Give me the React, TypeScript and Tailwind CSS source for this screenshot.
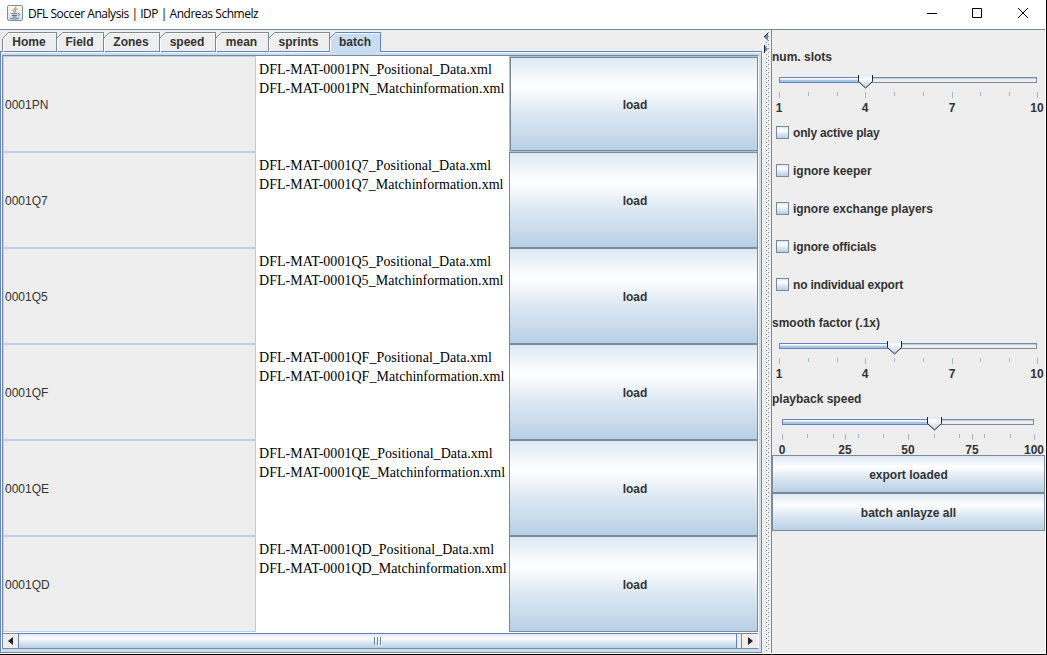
import React from "react";

const TABS = [
  { name: "Home", width: "w-[54px]" },
  { name: "Field", width: "w-[47px]" },
  { name: "Zones", width: "w-[56px]" },
  { name: "speed", width: "w-[56px]" },
  { name: "mean", width: "w-[53px]" },
  { name: "sprints", width: "w-[61px]" },
];

const MATCHES = ["0001PN", "0001Q7", "0001Q5", "0001QF", "0001QE", "0001QD"];

const METAL =
  "bg-[linear-gradient(to_bottom,#dde8f3_0%,#ffffff_30%,#dde8f3_60%,#b8cfe5_100%)]";

type Tick = { x: number; label?: string };

const TICKS_TEN: Tick[] = [
  { x: 7, label: "1" }, { x: 36 }, { x: 65 }, { x: 93, label: "4" }, { x: 122 },
  { x: 151 }, { x: 180, label: "7" }, { x: 208 }, { x: 237 }, { x: 265, label: "10" },
];

const TICKS_HUNDRED: Tick[] = [
  { x: 10, label: "0" }, { x: 35 }, { x: 61 }, { x: 73, label: "25" }, { x: 86 },
  { x: 111 }, { x: 136, label: "50" }, { x: 162 }, { x: 187 }, { x: 200, label: "75" },
  { x: 212 }, { x: 238 }, { x: 262, label: "100" },
];

function Slider({ start, end, value, ticks }: { start: number; end: number; value: number; ticks: Tick[] }) {
  return (
    <svg width="273" height="38" className="block h-[38px] shrink-0 overflow-visible">
      <defs>
        <linearGradient id="thumb" x1="0" y1="0" x2="0" y2="1">
          <stop offset="0" stopColor="#dde8f3" />
          <stop offset="0.3" stopColor="#fff" />
          <stop offset="0.6" stopColor="#dde8f3" />
          <stop offset="1" stopColor="#b8cfe5" />
        </linearGradient>
      </defs>
      <rect x={start + 0.5} y="1.5" width={end - start - 1} height="5" fill="#eeeeee" stroke="#7a8a99" />
      <path d={`M${value} 2.5H${end - 1}`} stroke="#b8cfe5" />
      <rect x={start + 0.5} y="1.5" width={value - start} height="5" fill="#fff" stroke="#6382bf" />
      <path d={`M${start + 1} 3.5H${value}`} stroke="#dde8f3" />
      <path d={`M${start + 1} 5H${value}`} stroke="#a9c3e2" strokeWidth="2" />
      <path
        d={`M${value - 6.5} -1V5.5L${value + 0.5} 12L${value + 7.5} 5.5V-1`}
        fill="url(#thumb)"
        stroke="#1f2427"
      />
      {ticks.map((t) => (
        <g key={t.x}>
          <path d={`M${t.x + 0.5} 16V${t.label ? 22 : 20}`} stroke="#a3b8cc" />
          {t.label && (
            <text x={t.x} y="36" textAnchor="middle" fill="#333333">
              {t.label}
            </text>
          )}
        </g>
      ))}
    </svg>
  );
}

function Caption({ text }: { text: string }) {
  return <div className="flex h-[38px] shrink-0 items-center">{text}</div>;
}

function Check({ text, spacing = "" }: { text: string; spacing?: string }) {
  return (
    <label className="flex h-[38px] shrink-0 items-center gap-1 pl-1">
      <span className={`mb-px size-[13px] border border-[#7a8a99] ${METAL}`} />
      <span className={spacing}>{text}</span>
    </label>
  );
}

function JavaIcon() {
  return (
    <svg width="16" height="16" viewBox="0 0 16 16" className="shrink-0">
      <defs>
        <linearGradient id="plate" x1="0" y1="0" x2="0" y2="1">
          <stop offset="0" stopColor="#fafafa" />
          <stop offset="1" stopColor="#d8dee3" />
        </linearGradient>
      </defs>
      <rect x="0.5" y="0.5" width="15" height="15" rx="1.5" fill="url(#plate)" stroke="#7890a3" />
      <path d="M8.8 1.5C9.6 3.8 5.7 4.2 6.6 6.2L7.6 7.6M10.4 3.7C8.5 4.5 8 5.2 8.9 7.2" fill="none" stroke="#e78a35" strokeWidth="1.2" />
      <path d="M4.4 8.7H10.6M5 10.5H10M5.5 12H9.6M3.3 13.3C5 14.2 10 14.2 12 13M10.8 8.6C13.3 8 13 10.5 11 11" fill="none" stroke="#4d7797" strokeWidth="1" />
    </svg>
  );
}

function TitleBar() {
  return (
    <header className="flex h-[29px] shrink-0 items-center bg-white pl-[7px] pb-[3px] font-['Open_Sans',sans-serif]">
      <JavaIcon />
      <span className="ml-[5px] flex-1 pt-[2px] text-[12px] font-normal tracking-[-0.46px] text-black">
        DFL Soccer Analysis | IDP | Andreas Schmelz
      </span>
      <svg width="121" height="14" className="shrink-0">
        <path d="M2 7.5H12M47.5 2.5H56.5V11.5H47.5V2M93 2L103 12M103 2L93 12" fill="none" stroke="#000" />
      </svg>
    </header>
  );
}

function TabStrip() {
  return (
    <nav className="flex h-5 shrink-0 pl-[2px]">
      {TABS.map((t, i) => (
        <div key={t.name} className={`relative flex shrink-0 ${t.width}`}>
          <svg className="absolute left-0 top-0 h-5 w-full">
            <path d="M1.5 20V7L7 1.5H100" fill="none" stroke="#fff" />
            <path d="M0.5 20V6.5L6.5 0.5H100" fill="none" stroke="#7a8a99" />
            {i > 0 && <path d="M0.5 0V20" stroke="#7a8a99" />}
          </svg>
          <span className="relative flex h-[19px] flex-1 items-center justify-center">{t.name}</span>
        </div>
      ))}
      <div className="relative w-[52px] shrink-0">
        <svg width="52" height="23" className="absolute left-0 top-0 z-10">
          <path d="M1 23V6L6.5 0.5H51V23Z" fill="#c8ddf2" />
          <path d="M1.5 20V7L7 1.5H51" fill="none" stroke="#fff" />
          <path d="M0.5 20V6.5L6.5 0.5H51.5V20" fill="none" stroke="#6382bf" />
          <path d="M0.5 0V19" stroke="#7a8a99" />
        </svg>
        <span className="relative z-20 flex h-[19px] items-center justify-center">batch</span>
      </div>
    </nav>
  );
}

function MatchRow({ id, first }: { id: string; first: boolean }) {
  return (
    <div className="flex h-24 shrink-0">
      <div className="flex w-[253px] items-center border border-[#b8cfe5] bg-[#eeeeee] pl-px pt-[2px] font-normal">
        {id}
      </div>
      <div className="w-[253px] whitespace-nowrap bg-white pl-[3px] pt-[4px] font-['Liberation_Serif',serif] text-[14px] leading-[19px] font-normal tracking-[0.035px] text-black">
        <p>DFL-MAT-{id}_Positional_Data.xml</p>
        <p>DFL-MAT-{id}_Matchinformation.xml</p>
      </div>
      <button
        className={`w-[249px] border pl-[3px] pt-[2px] ${METAL} ${
          first
            ? "border-[#a9c0d6] border-r-[#7a8a99] shadow-[inset_1px_1px_0_#7a8a99,inset_0_-1px_0_#7a8a99]"
            : "border-[#7a8a99]"
        }`}
      >
        load
      </button>
    </div>
  );
}

function ScrollBar() {
  return (
    <div className="mt-px flex h-[15px] shrink-0 border-t border-[#7a8a99] bg-[#eeeeee]">
      <div className="flex w-[15px] items-center justify-center">
        <svg width="5" height="8"><path d="M5 0V8L0 4Z" fill="#222" /></svg>
      </div>
      <div className={`-mt-px flex w-[719px] items-center justify-center border border-b-0 border-[#6382bf] ${METAL}`}>
        <svg width="8" height="9">
          <path d="M1.5 0V8M4.5 0V8M7.5 0V8" transform="translate(-1)" stroke="#6382bf" />
          <path d="M1.5 1V9M4.5 1V9M7.5 1V9" stroke="#fff" />
        </svg>
      </div>
      <div className="w-[5px] border-r border-[#7a8a99]" />
      <div className="flex flex-1 items-center justify-center">
        <svg width="5" height="8"><path d="M0 0V8L5 4Z" fill="#222" /></svg>
      </div>
    </div>
  );
}

function Splitter() {
  return (
    <svg width="9" height="623" className="shrink-0 bg-[#eeeeee]">
      <defs>
        <pattern id="bumps" width="4" height="4" patternUnits="userSpaceOnUse">
          <path d="M0 0H1V1H0ZM2 2H3V3H2Z" fill="#7a8a99" />
          <path d="M1 1H2V2H1ZM3 3H4V4H3Z" fill="#fff" />
        </pattern>
      </defs>
      <rect width="1" height="623" fill="#fff" />
      <rect x="4" y="1" width="4" height="620" fill="url(#bumps)" />
      <path d="M6 3V11L2 7Z" fill="#6382bf" />
      <path d="M6 3L2 7" stroke="#222" />
      <path d="M2 15V23L6 19Z" fill="#6382bf" />
      <path d="M2.5 15V23" stroke="#222" />
    </svg>
  );
}

export default function App() {
  return (
    <div className="flex h-[655px] w-[1047px] flex-col overflow-hidden border-b border-r border-black bg-white font-['Liberation_Sans',Arial,sans-serif] text-[12px] font-bold text-[#333333]">
      <TitleBar />
      <div className="mr-px flex h-[624px] shrink-0 border-t border-[#7a8a99] bg-[#eeeeee]">
        <main className="flex w-[762px] shrink-0 flex-col pt-[2px]">
          <TabStrip />
          <div className="-mt-px flex h-[602px] shrink-0 flex-col border border-[#6382bf] border-r-[#7a8a99] border-b-[#7a8a99] bg-[#c8ddf2] pt-[3px] pr-[2px] pl-px shadow-[inset_1px_1px_0_#fff]">
            <div className="flex h-[594px] flex-col overflow-hidden border border-[#7a8a99] border-r-white bg-white">
              {MATCHES.map((m, i) => (
                <MatchRow key={m} id={m} first={i === 0} />
              ))}
              <ScrollBar />
            </div>
          </div>
        </main>
        <Splitter />
        <aside className="flex flex-1 flex-col border-l border-[#7a8a99] pt-[8px]">
          <Caption text="num. slots" />
          <Slider start={7} end={265} value={93} ticks={TICKS_TEN} />
          <Check text="only active play" spacing="tracking-[-0.18px]" />
          <Check text="ignore keeper" />
          <Check text="ignore exchange players" spacing="tracking-[-0.04px]" />
          <Check text="ignore officials" spacing="tracking-[-0.12px]" />
          <Check text="no individual export" spacing="tracking-[-0.2px]" />
          <Caption text="smooth factor (.1x)" />
          <Slider start={7} end={265} value={122} ticks={TICKS_TEN} />
          <Caption text="playback speed" />
          <Slider start={10} end={262} value={162} ticks={TICKS_HUNDRED} />
          <button className={`relative -mt-px h-[38px] shrink-0 border border-[#7a8a99] pt-[2px] ${METAL}`}>export loaded</button>
          <button className={`h-[38px] shrink-0 border border-[#7a8a99] pt-[2px] ${METAL}`}>batch anlayze all</button>
        </aside>
      </div>
    </div>
  );
}
